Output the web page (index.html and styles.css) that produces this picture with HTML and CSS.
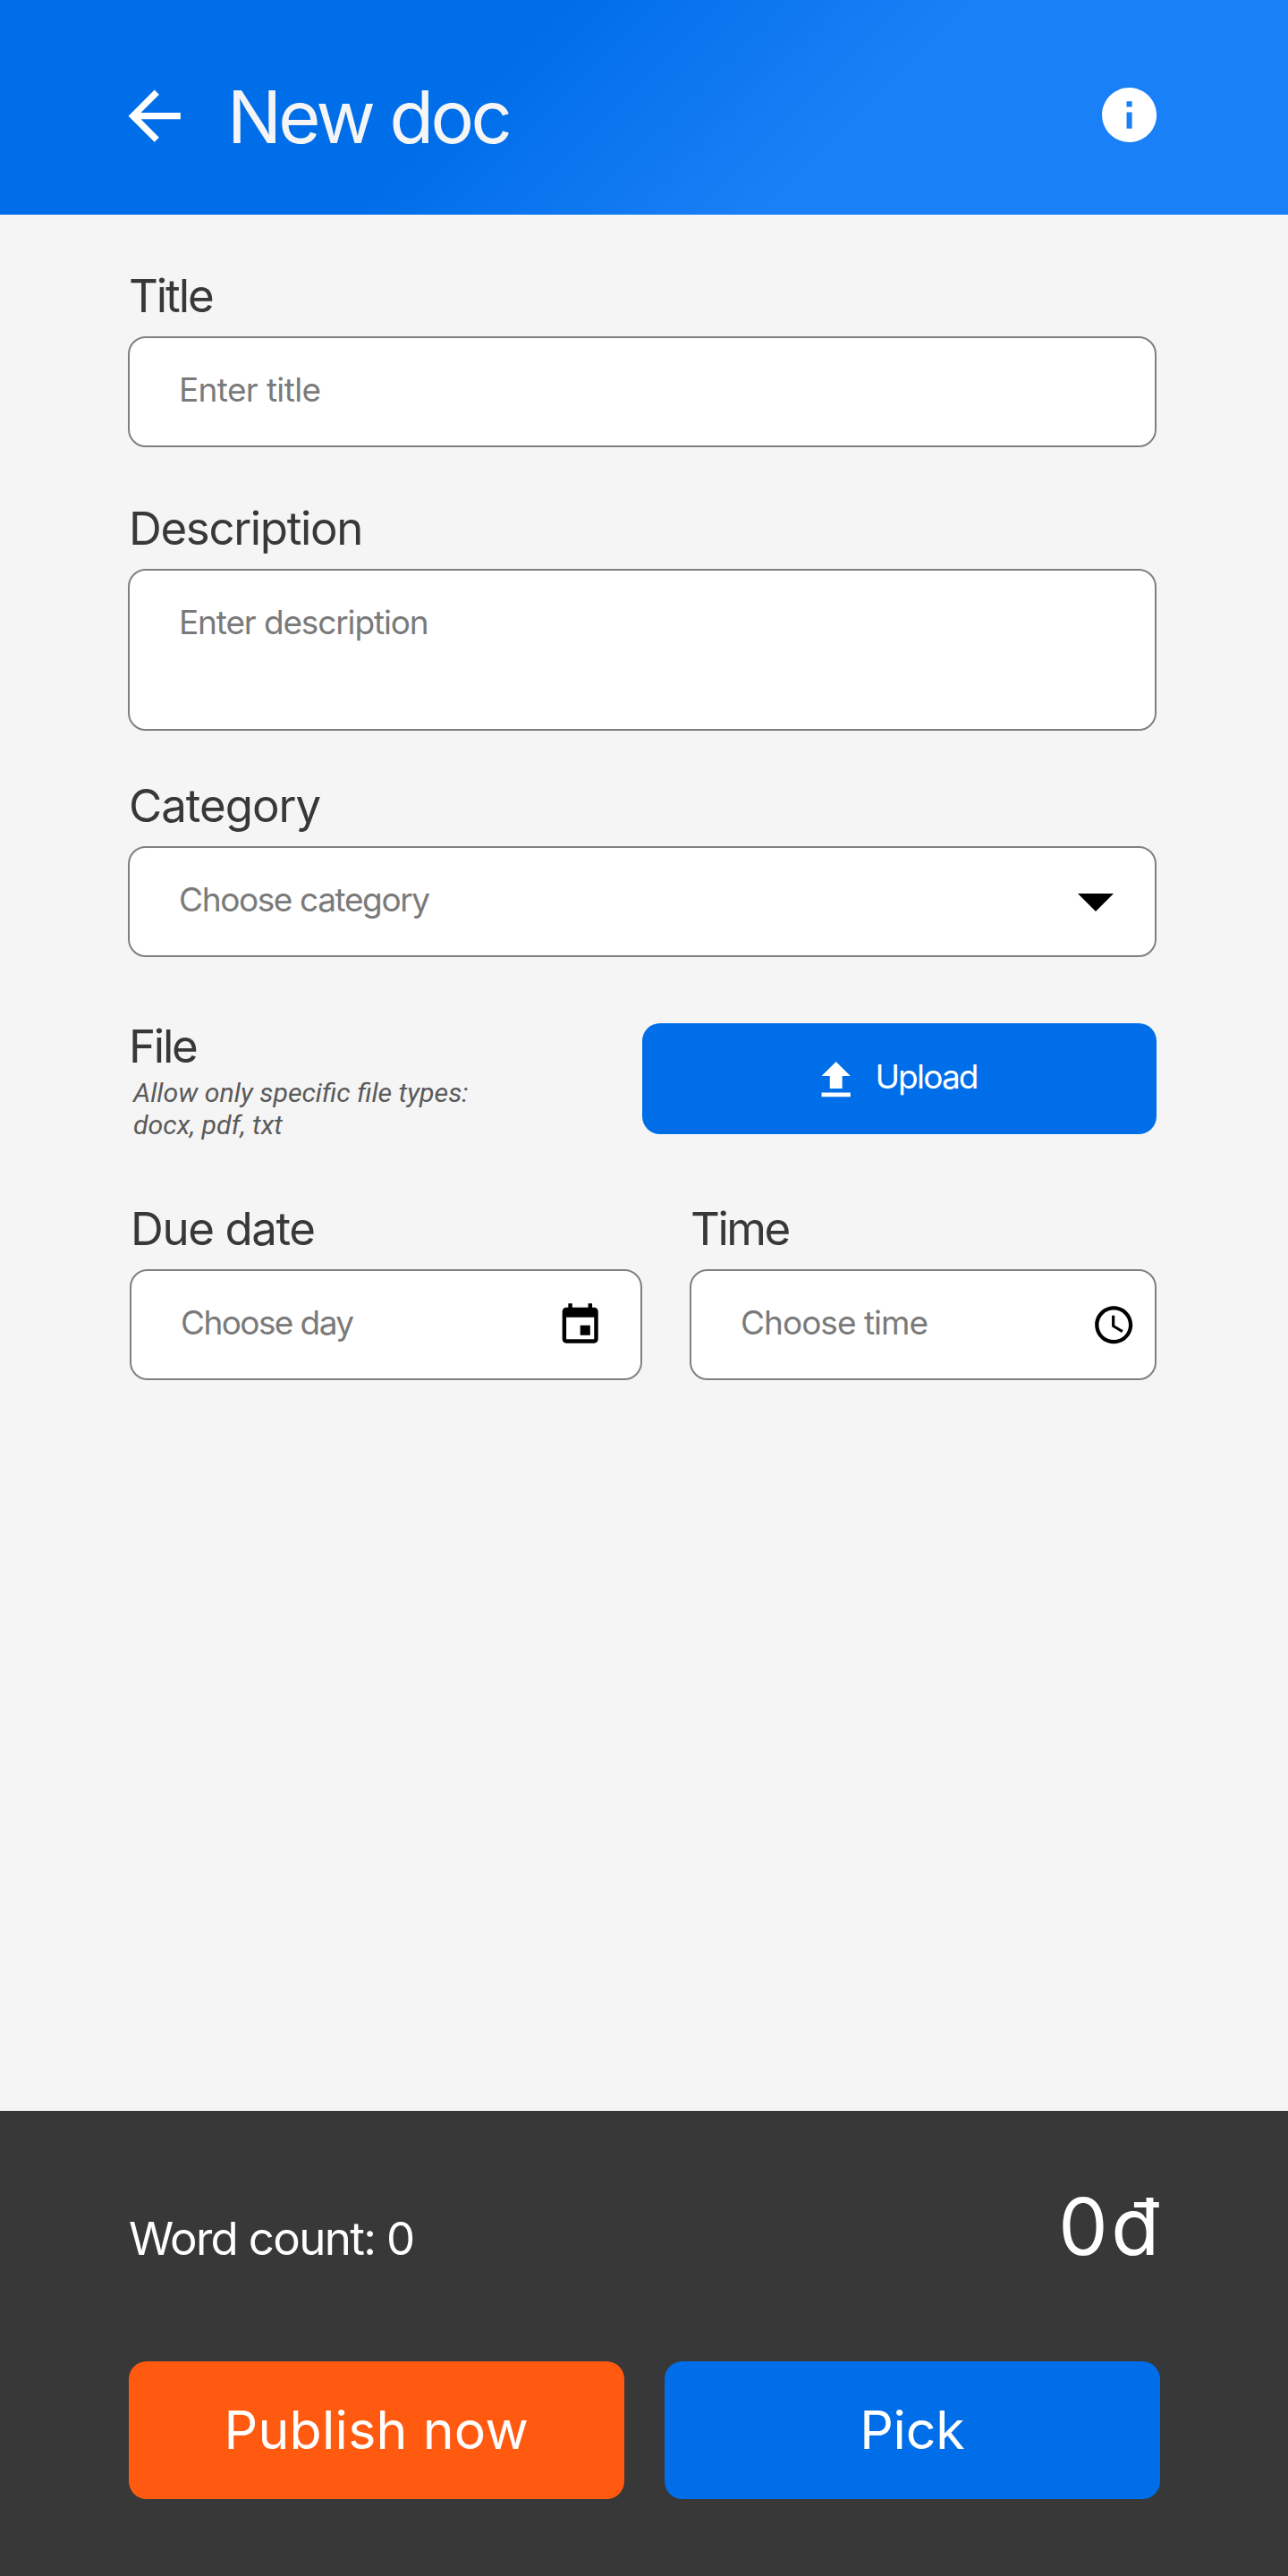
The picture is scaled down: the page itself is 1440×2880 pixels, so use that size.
FILE: index.html
```html
<!DOCTYPE html>
<html lang="en">
<head>
<meta charset="utf-8">
<title>New doc</title>
<link rel="stylesheet" href="styles.css">
</head>
<body>
<div class="screen">
  <header class="topbar">
    <svg class="icon-back" viewBox="0 0 24 24"><path d="M20 11H7.83l5.59-5.59L12 4l-8 8 8 8 1.41-1.41L7.83 13H20v-2z"/></svg>
    <h1 class="topbar-title">New doc</h1>
    <svg class="icon-info" viewBox="0 0 24 24"><path d="M12 2C6.48 2 2 6.48 2 12s4.48 10 10 10 10-4.48 10-10S17.52 2 12 2zm1 15h-2v-6h2v6zm0-8h-2V7h2v2z"/></svg>
  </header>

  <main class="form">
    <section class="group">
      <div class="label label-title">Title</div>
      <div class="field"><span class="hint hint-title">Enter title</span></div>
    </section>

    <section class="group group-description">
      <div class="label label-description">Description</div>
      <div class="field field-tall"><span class="hint hint-description">Enter description</span></div>
    </section>

    <section class="group group-category">
      <div class="label label-category">Category</div>
      <div class="field field-select">
        <span class="hint hint-category">Choose category</span>
        <svg class="icon-caret" viewBox="7 10 10 5"><path d="M7 10l5 5 5-5z"/></svg>
      </div>
    </section>

    <section class="file-row">
      <div class="file-info">
        <div class="label label-file">File</div>
        <p class="file-note">Allow only specific file types:<br>docx, pdf, txt</p>
      </div>
      <div class="upload">
        <svg class="icon-upload" viewBox="0 0 24 24"><path d="M9 16h6v-6h4l-7-7-7 7h4zm-4 2h14v2H5z"/></svg>
        <span class="upload-text">Upload</span>
      </div>
    </section>

    <section class="when-row">
      <div class="group group-date">
        <div class="label label-date">Due date</div>
        <div class="field field-date">
          <span class="hint hint-day">Choose day</span>
          <svg class="icon-event" viewBox="0 0 24 24"><path d="M17 12h-5v5h5v-5zM16 1v2H8V1H6v2H5c-1.11 0-1.99.9-1.99 2L3 19c0 1.1.89 2 2 2h14c1.1 0 2-.9 2-2V5c0-1.1-.9-2-2-2h-1V1h-2zm3 18H5V8h14v11z"/></svg>
        </div>
      </div>
      <div class="group group-time">
        <div class="label label-time">Time</div>
        <div class="field field-time">
          <span class="hint hint-time">Choose time</span>
          <svg class="icon-clock" viewBox="0 0 24 24"><path d="M11.99 2C6.47 2 2 6.48 2 12s4.47 10 9.99 10C17.52 22 22 17.52 22 12S17.52 2 11.99 2zM12 20c-4.42 0-8-3.58-8-8s3.58-8 8-8 8 3.58 8 8-3.58 8-8 8z"/><path d="M12.5 7H11v6l5.25 3.15.75-1.23-4.5-2.67z"/></svg>
        </div>
      </div>
    </section>
  </main>

  <footer class="summary">
    <div class="totals">
      <span class="count">Word count: 0</span>
      <span class="price">0đ</span>
    </div>
    <div class="actions">
      <div class="button button-publish">Publish now</div>
      <div class="button button-pick">Pick</div>
    </div>
  </footer>
</div>
</body>
</html>
```
FILE: styles.css
```css
* {
  box-sizing: border-box;
}

body {
  margin: 0;
  font-family: Inter, "Liberation Sans", sans-serif;
  color: #383838;
  background: #f5f5f5;
}

svg {
  display: block;
  flex: none;
}

.screen {
  display: flex;
  flex-direction: column;
  width: 1440px;
  height: 2880px;
}

/* Header */
.topbar {
  display: flex;
  align-items: center;
  flex: none;
  height: 240px;
  padding: 19px 141px 0 128.5px;
  background: linear-gradient(135deg, #006ee9 38%, #1a80f7 65%);
}

.icon-back {
  width: 87.4px;
  height: 87.4px;
  fill: #fff;
}

.topbar-title {
  flex: 1;
  margin: 2px 0 0 38px;
  font-size: 81px;
  font-weight: 400;
  line-height: 98px;
  letter-spacing: -3.57px;
  color: #f5f5f5;
}

.icon-info {
  width: 73.2px;
  height: 73.2px;
  margin-top: -2px;
  fill: #fff;
}

/* Form */
.form {
  flex: 1;
  padding: 61px 147px 0 143px;
}

.label {
  margin-bottom: 15px;
  padding-left: 1px;
  font-size: 51px;
  line-height: 60px;
}

.field {
  display: flex;
  align-items: center;
  justify-content: space-between;
  height: 124px;
  padding-left: 55px;
  border: 2px solid #808080;
  border-radius: 20px;
  background: #fff;
}

.field-tall {
  align-items: flex-start;
  height: 181px;
  padding-top: 35.5px;
}

.field-select { padding-right: 46px; }
.field-date { padding-right: 41px; }
.field-time { padding-right: 21px; }

.hint {
  margin-bottom: 4px;
  font-size: 37px;
  line-height: 44px;
  color: #7a7a7a;
}

.label-title { letter-spacing: -2.08px; }
.label-description { letter-spacing: -1.35px; }
.label-category { letter-spacing: -1.02px; }
.label-file { letter-spacing: -2.27px; }
.label-date { letter-spacing: -1.4px; }
.label-time { letter-spacing: -2.48px; }

.hint-title { letter-spacing: -0.64px; }
.hint-description { letter-spacing: -1.14px; }
.hint-category { letter-spacing: -1.39px; }
.hint-day { letter-spacing: -1.6px; }
.hint-time { letter-spacing: -0.98px; }

.group-description { margin-top: 61px; }
.group-category { margin-top: 54px; }

.icon-caret {
  width: 40px;
  height: 20px;
  margin-top: 2px;
}

.icon-event {
  width: 53.4px;
  height: 53.4px;
  margin-top: 1px;
}

.icon-clock {
  width: 50.4px;
  height: 50.4px;
}

/* File picker */
.file-row {
  display: flex;
  justify-content: space-between;
  height: 136px;
  margin-top: 70px;
}

.label-file { margin-bottom: 4px; }

.file-note {
  margin: 0;
  padding-left: 6px;
  font: italic 30.3px/36px Roboto, sans-serif;
  color: #5a5a5a;
}

.upload {
  display: flex;
  align-items: center;
  gap: 16px;
  width: 575px;
  height: 124px;
  margin-top: 4px;
  padding-left: 189px;
  border-radius: 20px;
  background: #006ee9;
}

.icon-upload {
  width: 55.4px;
  height: 55.4px;
  margin-top: 3px;
  fill: #fff;
}

.upload-text {
  margin-bottom: 4px;
  font-size: 37px;
  line-height: 44px;
  letter-spacing: -1.8px;
  color: #fff;
}

/* Date and time */
.when-row {
  display: flex;
  gap: 53px;
  margin-top: 68px;
  padding-left: 2px;
}

.group-date { width: 573px; }
.group-time { flex: 1; }

/* Summary */
.summary {
  flex: none;
  height: 520px;
  padding: 77px 143.5px 0 144px;
  background: #383838;
  color: #fff;
}

.totals {
  display: flex;
  align-items: baseline;
  justify-content: space-between;
  height: 105px;
}

.count {
  font-size: 51px;
  line-height: 60px;
  letter-spacing: -1.66px;
}

.price {
  margin-right: -3px;
  font-size: 88px;
  line-height: 104px;
  letter-spacing: 3.4px;
}

.actions {
  display: flex;
  justify-content: space-between;
  margin-top: 98px;
}

.button {
  width: 553.5px;
  height: 154px;
  border-radius: 20px;
  font-size: 59px;
  line-height: 154px;
  text-align: center;
}

.button-publish {
  background: #ff5a10;
  letter-spacing: 0.29px;
}

.button-pick {
  background: #006ee9;
  letter-spacing: -0.23px;
}
```
